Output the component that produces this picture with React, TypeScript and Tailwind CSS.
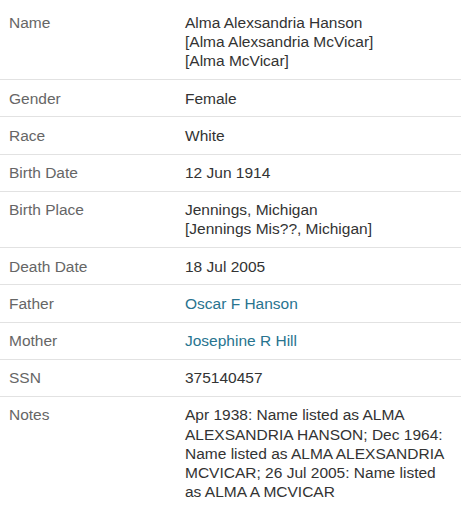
import React from 'react';

type Row = {
  label: string;
  lines: string[];
  link?: boolean;
};

const rows: Row[] = [
  {
    label: 'Name',
    lines: ['Alma Alexsandria Hanson', '[Alma Alexsandria McVicar]', '[Alma McVicar]'],
  },
  { label: 'Gender', lines: ['Female'] },
  { label: 'Race', lines: ['White'] },
  { label: 'Birth Date', lines: ['12 Jun 1914'] },
  { label: 'Birth Place', lines: ['Jennings, Michigan', '[Jennings Mis??, Michigan]'] },
  { label: 'Death Date', lines: ['18 Jul 2005'] },
  { label: 'Father', lines: ['Oscar F Hanson'], link: true },
  { label: 'Mother', lines: ['Josephine R Hill'], link: true },
  { label: 'SSN', lines: ['375140457'] },
  {
    label: 'Notes',
    lines: [
      'Apr 1938: Name listed as ALMA ALEXSANDRIA HANSON; Dec 1964: Name listed as ALMA ALEXSANDRIA MCVICAR; 26 Jul 2005: Name listed as ALMA A MCVICAR',
    ],
  },
];

export default function App() {
  return (
    <div className="min-h-screen bg-white font-['Liberation_Sans',Arial,sans-serif] text-[15.5px] leading-[19.2px]">
      <div className="w-[461px]">
        {rows.map((row, idx) => (
          <div
            key={row.label}
            className={`grid grid-cols-[185px_1fr] ${
              idx === 0 ? 'pt-[13px]' : 'pt-[8.5px]'
            } pb-[8.5px] ${idx < rows.length - 1 ? 'border-b border-[#e2e2e2]' : ''}`}
          >
            <div className="pl-[9px] text-[#666666]">{row.label}</div>
            <div className="pr-[9px]">
              {row.lines.map((line, i) =>
                row.link ? (
                  <a key={i} href="#" className="block text-[#28748f]">
                    {line}
                  </a>
                ) : (
                  <div key={i} className="text-[#333333]">
                    {line}
                  </div>
                )
              )}
            </div>
          </div>
        ))}
      </div>
    </div>
  );
}
